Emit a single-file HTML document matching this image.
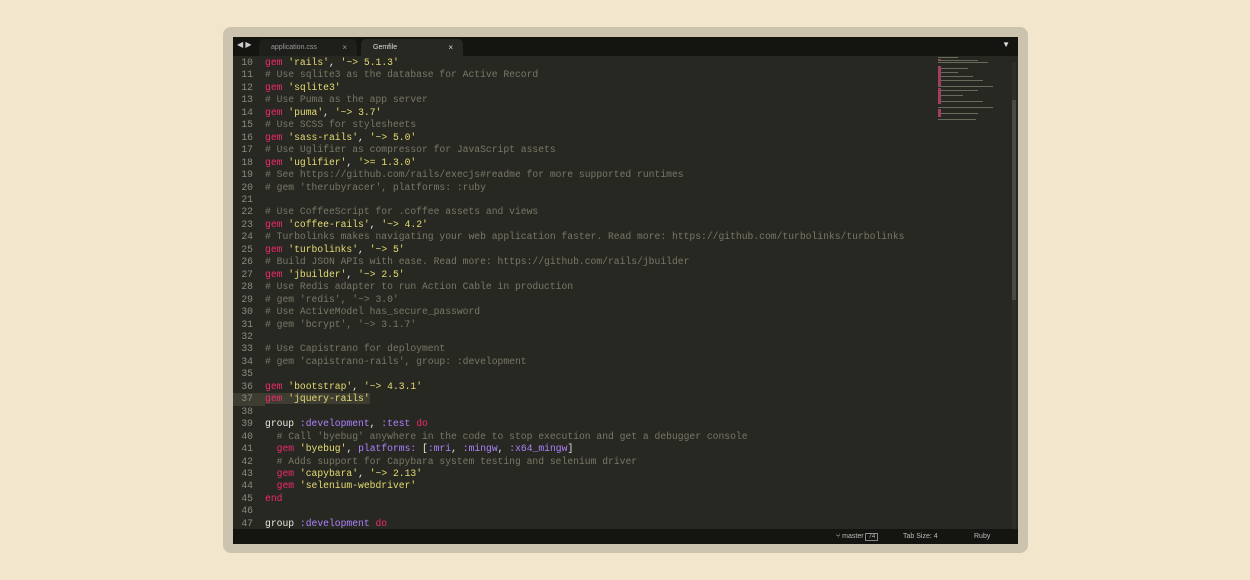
<!DOCTYPE html>
<html><head><meta charset="utf-8"><style>
body{margin:0;width:1250px;height:580px;background:#f2e6cc;position:relative;overflow:hidden;font-family:"Liberation Sans",sans-serif}
.frame{position:absolute;left:223px;top:27px;width:805px;height:526px;background:#cbc3ae;border-radius:8px}
.win{position:absolute;left:233px;top:37px;width:785px;height:507px;background:#272822;overflow:hidden}
.tabs{position:absolute;left:0;top:0;width:785px;height:19px;background:#141411}
.tab{position:absolute;top:2px;height:17px;font-size:7px;color:#999;line-height:17px;padding-left:12px;box-sizing:border-box}
.t1{left:26px;width:98px;background:#1e1e1a;border-radius:5px 5px 0 0}
.t2{left:128px;width:102px;background:#272822;color:#ddd;border-radius:5px 5px 0 0}
.x{position:absolute;right:10px;top:0;font-size:8px}
.code{position:absolute;left:0;top:20px;font-family:"Liberation Mono",monospace;font-size:9.7px;line-height:12.46px;color:#e8e8e0;white-space:pre}
.ln{display:inline-block;width:20px;text-align:right;color:#8a8a80;margin-right:12px}
.k{color:#ef2a70}.s{color:#e6db74}.c{color:#7a7766}.y{color:#ae81ff}
.hl{background:#3e3d32}
.status{position:absolute;left:0;top:492px;width:785px;height:15px;background:#141411;font-size:7px;color:#bbb;line-height:15px}
.sb{position:absolute;left:779px;top:26px;width:4px;height:466px;background:#2e2f2a}
.th{position:absolute;left:779px;top:63px;width:4px;height:200px;background:#4a4a44}
</style></head><body>
<div class="frame"></div>
<div class="win">
<div class="tabs">
<div style="position:absolute;left:4px;top:3px;color:#ccc;font-size:8px">◀ ▶</div>
<div class="tab t1">application.css<span class="x">×</span></div>
<div class="tab t2">Gemfile<span class="x">×</span></div>
<div style="position:absolute;right:8px;top:3px;color:#ddd;font-size:8px">▼</div>
</div>
<div class="code"><div style="padding-top:0"><span class="ln">10</span><span class="k">gem</span> <span class="s">'rails'</span>, <span class="s">'~&gt; 5.1.3'</span>
<span class="ln">11</span><span class="c"># Use sqlite3 as the database for Active Record</span>
<span class="ln">12</span><span class="k">gem</span> <span class="s">'sqlite3'</span>
<span class="ln">13</span><span class="c"># Use Puma as the app server</span>
<span class="ln">14</span><span class="k">gem</span> <span class="s">'puma'</span>, <span class="s">'~&gt; 3.7'</span>
<span class="ln">15</span><span class="c"># Use SCSS for stylesheets</span>
<span class="ln">16</span><span class="k">gem</span> <span class="s">'sass-rails'</span>, <span class="s">'~&gt; 5.0'</span>
<span class="ln">17</span><span class="c"># Use Uglifier as compressor for JavaScript assets</span>
<span class="ln">18</span><span class="k">gem</span> <span class="s">'uglifier'</span>, <span class="s">'&gt;= 1.3.0'</span>
<span class="ln">19</span><span class="c"># See https://github.com/rails/execjs#readme for more supported runtimes</span>
<span class="ln">20</span><span class="c"># gem 'therubyracer', platforms: :ruby</span>
<span class="ln">21</span>
<span class="ln">22</span><span class="c"># Use CoffeeScript for .coffee assets and views</span>
<span class="ln">23</span><span class="k">gem</span> <span class="s">'coffee-rails'</span>, <span class="s">'~&gt; 4.2'</span>
<span class="ln">24</span><span class="c"># Turbolinks makes navigating your web application faster. Read more: https://github.com/turbolinks/turbolinks</span>
<span class="ln">25</span><span class="k">gem</span> <span class="s">'turbolinks'</span>, <span class="s">'~&gt; 5'</span>
<span class="ln">26</span><span class="c"># Build JSON APIs with ease. Read more: https://github.com/rails/jbuilder</span>
<span class="ln">27</span><span class="k">gem</span> <span class="s">'jbuilder'</span>, <span class="s">'~&gt; 2.5'</span>
<span class="ln">28</span><span class="c"># Use Redis adapter to run Action Cable in production</span>
<span class="ln">29</span><span class="c"># gem 'redis', '~&gt; 3.0'</span>
<span class="ln">30</span><span class="c"># Use ActiveModel has_secure_password</span>
<span class="ln">31</span><span class="c"># gem 'bcrypt', '~&gt; 3.1.7'</span>
<span class="ln">32</span>
<span class="ln">33</span><span class="c"># Use Capistrano for deployment</span>
<span class="ln">34</span><span class="c"># gem 'capistrano-rails', group: :development</span>
<span class="ln">35</span>
<span class="ln">36</span><span class="k">gem</span> <span class="s">'bootstrap'</span>, <span class="s">'~&gt; 4.3.1'</span>
<span class="hl" style="display:inline-block;width:32px"><span class="ln" style="margin-right:12px">37</span></span><span class="hl"><span class="k">gem</span> <span class="s">'jquery-rails'</span></span>
<span class="ln">38</span>
<span class="ln">39</span>group <span class="y">:development</span>, <span class="y">:test</span> <span class="k">do</span>
<span class="ln">40</span>  <span class="c"># Call 'byebug' anywhere in the code to stop execution and get a debugger console</span>
<span class="ln">41</span>  <span class="k">gem</span> <span class="s">'byebug'</span>, <span class="y">platforms:</span> [<span class="y">:mri</span>, <span class="y">:mingw</span>, <span class="y">:x64_mingw</span>]
<span class="ln">42</span>  <span class="c"># Adds support for Capybara system testing and selenium driver</span>
<span class="ln">43</span>  <span class="k">gem</span> <span class="s">'capybara'</span>, <span class="s">'~&gt; 2.13'</span>
<span class="ln">44</span>  <span class="k">gem</span> <span class="s">'selenium-webdriver'</span>
<span class="ln">45</span><span class="k">end</span>
<span class="ln">46</span>
<span class="ln">47</span>group <span class="y">:development</span> <span class="k">do</span></div></div>
<svg style="position:absolute;left:705px;top:20px" width="62" height="80">
<g fill="#6a6a5a"><rect x="0" y="0" width="20" height="1"/><rect x="0" y="3" width="40" height="1"/><rect x="0" y="5" width="50" height="1"/>
<rect x="0" y="11" width="30" height="1"/><rect x="0" y="15" width="20" height="1"/><rect x="0" y="19" width="35" height="1"/><rect x="0" y="23" width="45" height="1"/>
<rect x="0" y="29" width="55" height="1"/><rect x="0" y="33" width="40" height="1"/><rect x="0" y="38" width="25" height="1"/><rect x="0" y="44" width="45" height="1"/>
<rect x="0" y="50" width="55" height="1"/><rect x="0" y="56" width="40" height="1"/><rect x="0" y="62" width="38" height="1"/></g>
<g fill="#a04060"><rect x="0" y="2" width="3" height="1"/><rect x="0" y="9" width="3" height="20"/><rect x="0" y="31" width="3" height="16"/><rect x="0" y="52" width="3" height="8"/></g>
</svg>
<div class="sb"></div><div class="th"></div>
<div class="status"><span style="position:absolute;left:603px">⑂ master <span style="border:1px solid #888;padding:0 2px;font-size:6px">74</span></span><span style="position:absolute;left:670px">Tab Size: 4</span><span style="position:absolute;left:741px">Ruby</span></div>
</div>
</body></html>
